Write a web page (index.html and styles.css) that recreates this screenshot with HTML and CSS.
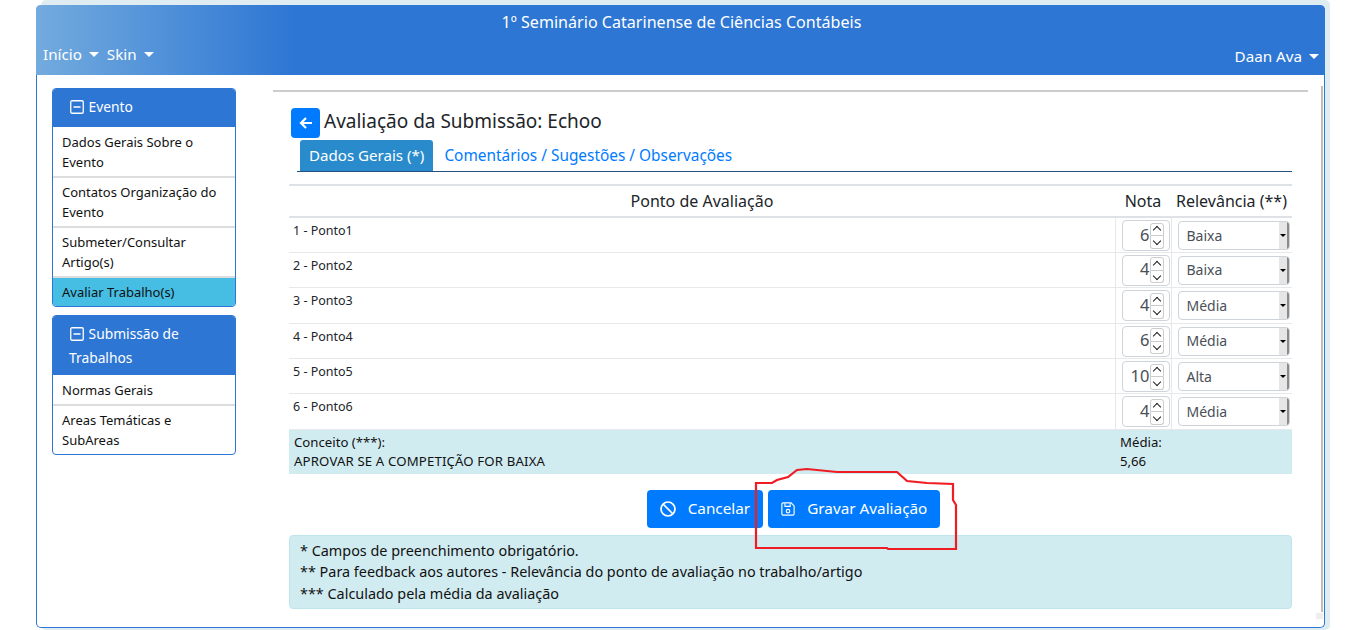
FILE: index.html
```html
<!DOCTYPE html>
<html lang="pt">
<head>
<meta charset="utf-8">
<title>Avaliação da Submissão</title>
<link rel="stylesheet" href="styles.css">
</head>
<body>
<div class="app">
  <header class="topbar">
    <div class="event-title">1º Seminário Catarinense de Ciências Contábeis</div>
    <nav class="nav">
      <div class="nav-left">
        <span class="nav-item">Início<i class="caret"></i></span>
        <span class="nav-item">Skin<i class="caret"></i></span>
      </div>
      <span class="nav-item user">Daan Ava<i class="caret"></i></span>
    </nav>
  </header>
  <div class="content">
    <aside class="sidebar">
      <section class="menu">
        <h3 class="menu-head"><svg class="minus" viewBox="0 0 14 14"><rect x="0.75" y="0.75" width="12.5" height="12.5" rx="1.2"/><path d="M3.5 7h7"/></svg> Evento</h3>
        <a class="menu-item">Dados Gerais Sobre o Evento</a>
        <a class="menu-item">Contatos Organização do Evento</a>
        <a class="menu-item">Submeter/Consultar Artigo(s)</a>
        <a class="menu-item active">Avaliar Trabalho(s)</a>
      </section>
      <section class="menu">
        <h3 class="menu-head"><svg class="minus" viewBox="0 0 14 14"><rect x="0.75" y="0.75" width="12.5" height="12.5" rx="1.2"/><path d="M3.5 7h7"/></svg> Submissão de Trabalhos</h3>
        <a class="menu-item">Normas Gerais</a>
        <a class="menu-item">Areas Temáticas e SubAreas</a>
      </section>
    </aside>
    <main class="main">
      <div class="title-row">
        <button class="back"><svg viewBox="0 0 16 16" width="16" height="16"><path d="M14 8H3M8 3 3 8l5 5" fill="none" stroke="#fff" stroke-width="2.2"/></svg></button>
        <h1 class="page-title">Avaliação da Submissão: Echoo</h1>
      </div>
      <div class="tabs">
        <span class="tab active">Dados Gerais (*)</span>
        <span class="tab">Comentários / Sugestões / Observações</span>
      </div>
      <table class="grid">
        <thead>
          <tr><th class="c-point">Ponto de Avaliação</th><th class="c-note">Nota</th><th class="c-rel">Relevância (**)</th></tr>
        </thead>
        <tbody>
          <tr><td>1 - Ponto1</td><td class="note"><div class="spin"><b>6</b><span class="arrows"><i class="up"></i><i class="down"></i></span></div></td><td class="rel"><div class="select"><span>Baixa</span><span class="drop"></span></div></td></tr>
          <tr><td>2 - Ponto2</td><td class="note"><div class="spin"><b>4</b><span class="arrows"><i class="up"></i><i class="down"></i></span></div></td><td class="rel"><div class="select"><span>Baixa</span><span class="drop"></span></div></td></tr>
          <tr><td>3 - Ponto3</td><td class="note"><div class="spin"><b>4</b><span class="arrows"><i class="up"></i><i class="down"></i></span></div></td><td class="rel"><div class="select"><span>Média</span><span class="drop"></span></div></td></tr>
          <tr><td>4 - Ponto4</td><td class="note"><div class="spin"><b>6</b><span class="arrows"><i class="up"></i><i class="down"></i></span></div></td><td class="rel"><div class="select"><span>Média</span><span class="drop"></span></div></td></tr>
          <tr><td>5 - Ponto5</td><td class="note"><div class="spin"><b>10</b><span class="arrows"><i class="up"></i><i class="down"></i></span></div></td><td class="rel"><div class="select"><span>Alta</span><span class="drop"></span></div></td></tr>
          <tr><td>6 - Ponto6</td><td class="note"><div class="spin"><b>4</b><span class="arrows"><i class="up"></i><i class="down"></i></span></div></td><td class="rel"><div class="select"><span>Média</span><span class="drop"></span></div></td></tr>
        </tbody>
        <tfoot>
          <tr><td>Conceito (***):<br><span class="caps">APROVAR SE A COMPETIÇÃO FOR BAIXA</span></td><td colspan="2">Média:<br>5,66</td></tr>
        </tfoot>
      </table>
      <div class="actions">
        <button class="btn"><svg viewBox="0 0 16 16" width="16" height="16"><circle cx="8" cy="8" r="7" fill="none" stroke="#fff" stroke-width="1.7"/><path d="M3 3l10 10" stroke="#fff" stroke-width="1.7"/></svg><span>Cancelar</span></button>
        <button class="btn"><svg viewBox="0 0 16 16" width="14" height="14"><path d="M1 2.500A1.500 1.500 0 0 1 2.500 1h9L15 4.500v9a1.500 1.500 0 0 1-1.500 1.500h-11A1.500 1.500 0 0 1 1 13.500z" fill="none" stroke="#fff" stroke-width="1.300"/><path d="M4.500 1.500v3.500h6V1.500" fill="none" stroke="#fff" stroke-width="1.200"/><circle cx="8" cy="10.500" r="2" fill="none" stroke="#fff" stroke-width="1.300"/></svg><span>Gravar Avaliação</span></button>
      </div>
      <div class="notes">
        <p>* Campos de preenchimento obrigatório.</p>
        <p>** Para feedback aos autores - Relevância do ponto de avaliação no trabalho/artigo</p>
        <p>*** Calculado pela média da avaliação</p>
      </div>
      <svg class="scribble" viewBox="0 0 212 90" width="212" height="90"><path d="M6 18 22 18 27 15 38 12 47 5 57 4 87 7 147 7 157 16 177 18 203 19 203 35 206 40 206 84 138 84 137 83 6 83Z" fill="none" stroke="#f01c24" stroke-width="2.200"/></svg>
    </main>
  </div>
  <div class="scroll-track"></div>
  <div class="scroll-thumb"></div>
</div>
</body>
</html>
```
FILE: styles.css
```css
* { box-sizing: border-box; }
html, body { margin: 0; height: 630px; overflow: hidden; background: #fff; }
body { font-family: "Noto Sans", "Open Sans", sans-serif; color: #212529; padding: 5px 36px 0 36px; }
.app { width: 1289px; height: 623px; border: 1px solid #2d76d4; border-top: 0; border-radius: 5px; position: relative; box-shadow: 5px -5px 0 #dfecf2, 5px 2px 0 #dfecf2; background: #fff; }
.topbar { height: 70px; margin: 0 -1px; background: linear-gradient(90deg, #73abde 0, #2d76d4 20%); border-radius: 5px 5px 0 0; color: #fff; position: relative; }
.event-title { text-align: center; font-size: 16.100px; line-height: 24px; padding: 5px 0 0 2px; }
.nav { display: flex; justify-content: space-between; padding: 0 6px 0 7px; margin-top: 4px; font-size: 15.200px; }
.nav-left { display: flex; gap: 8px; }
.nav-item { display: inline-flex; align-items: center; line-height: 28px; }
.user { padding-top: 4px; }
.caret { width: 0; height: 0; border: 5px solid transparent; border-top-color: #fff; border-bottom: 0; margin-left: 7px; }
.content { display: flex; }
.sidebar { width: 184px; margin: 13px 0 0 15px; display: flex; flex-direction: column; gap: 8px; flex: none; }
.menu { border: 1px solid #2d76d4; border-radius: 4px; overflow: hidden; background: #fff; }
.menu-head { margin: -1px -1px 0; min-height: 39px; background: #2d76d4; color: #fff; font-weight: 400; font-size: 13.800px; line-height: 24px; padding: 7px 16px 5px 17px; }
.minus { width: 14px; height: 14px; margin: 0 1px; vertical-align: -2px; fill: none; stroke: #fff; stroke-width: 1.300; }
.menu-item { display: block; color: #111; font-size: 13px; line-height: 20px; padding: 4px 9px; border-top: 2px solid #ddd; }
.menu-head + .menu-item { border-top: 0; padding-top: 5px; }
.active { background: #46bde3; }
.main { position: relative; margin: 15px 0 0 37px; width: 1035px; height: 538px; border-top: 2px solid #ccc; padding: 0 0 0 16px; }
.title-row { display: flex; align-items: center; gap: 4px; margin: 16px 0 0 2px; height: 30px; }
.back { width: 29px; height: 30px; background: #007bff; border: 0; border-radius: 4px; padding: 0; display: flex; align-items: center; justify-content: center; }
.page-title { margin: 0 0 4px; font-size: 19px; font-weight: 400; line-height: 26px; }
.tabs { display: flex; margin: 2px 16px 0 8px; padding-left: 3px; border-bottom: 1px solid #24517f; height: 32px; align-items: stretch; }
.tab { font-size: 15.400px; line-height: 31px; padding: 0 10px; color: #007bff; }
.tab.active { background: #2a8bcc; color: #fff; border-radius: 3px 3px 0 0; padding: 0 9px; margin-right: 1px; font-size: 15.100px; }
.grid { width: 1003px; margin-top: 12px; border-collapse: collapse; table-layout: fixed; font-size: 12.500px; }
.grid th { font-weight: 400; font-size: 16px; height: 32px; border-top: 2px solid #dee2e6; border-bottom: 2px solid #dee2e6; padding: 0; }
.c-note { width: 56px; }
.c-rel { width: 121px; }
.grid tbody td { height: 35.400px; border-bottom: 1px solid #e6e8ea; padding: 0; vertical-align: top; line-height: 26px; padding-left: 4px; }
.grid td.note { padding: 2px 0 0 6px; border-left: 1px solid #e6e8ea; border-right: 1px solid #e6e8ea; }
.grid td.rel { padding: 3px 0 0 6px; }
.spin { width: 48px; height: 31px; border: 1px solid #ced4da; border-radius: 4px; display: flex; align-items: center; justify-content: flex-end; padding-right: 5px; font-size: 16.500px; color: #495057; }
.spin b { font-weight: 400; margin-bottom: 2px; }
.arrows { width: 14px; height: 26px; display: flex; flex-direction: column; }
.arrows i { flex: 1; border: 1px solid #ccc; display: flex; align-items: center; justify-content: center; }
.up { border-radius: 3px 3px 0 0; }
.down { border-radius: 0 0 3px 3px; border-top: 0 !important; }
.arrows i::before { content: ""; width: 5px; height: 5px; border: solid #222; border-width: 1px 0 0 1px; }
.up::before { transform: translateY(1px) rotate(45deg); }
.down::before { transform: translateY(-1px) rotate(225deg); }
.select { width: 112px; height: 29px; border: 1px solid #ced4da; border-radius: 4px; display: flex; align-items: center; justify-content: space-between; padding-left: 8px; font-size: 14px; color: #495057; position: relative; overflow: hidden; }
.drop { width: 10px; height: 27px; background: #e6e6e6; border-right: 2px solid #8a8a8a; position: relative; }
.drop::after { content: ""; position: absolute; left: 1px; top: 12px; border: 3px solid transparent; border-top: 3px solid #000; border-bottom: 0; }
.grid tfoot td { background: #d1ecf1; height: 44px; padding: 3px 5px; font-size: 13.200px; line-height: 19px; color: #111; }
.caps { letter-spacing: 0.150px; }
.actions { display: flex; justify-content: center; gap: 5px; margin-top: 16px; width: 1003px; padding-left: 6px; }
.btn { height: 38px; background: #007bff; color: #fff; border: 0; border-radius: 4px; font: 15.300px "Noto Sans", sans-serif; padding: 0 13px; display: inline-flex; align-items: center; gap: 12px; }
.btn span { margin-bottom: 2px; }
.notes { width: 1003px; height: 74px; margin-top: 7px; background: #d1ecf1; border: 1px solid #bee5eb; border-radius: 4px; padding: 4px 10px; font-size: 14.400px; line-height: 21.500px; color: #111; }
.notes p { margin: 0; }
.scribble { position: absolute; left: 477px; top: 373px; }
.scroll-track { position: absolute; left: 1284px; top: 81px; width: 2px; height: 526px; background: #bdbdbd; }
.scroll-thumb { position: absolute; left: 1279px; top: 608px; width: 7px; height: 6px; background: #eee; }
```
